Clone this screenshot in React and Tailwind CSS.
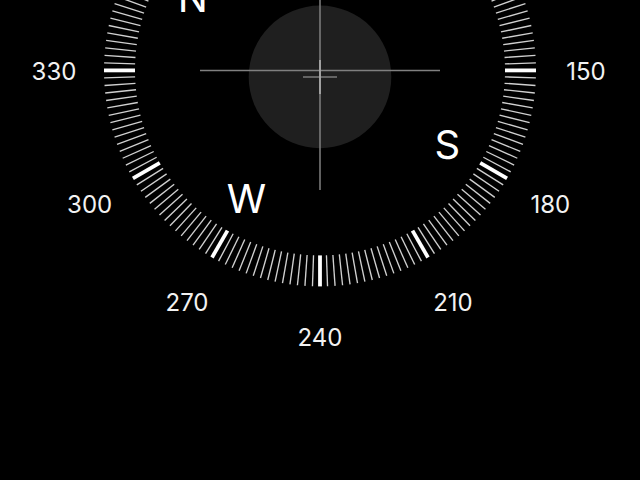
const HEADING = 60;
const OUTER_RADIUS = 216;
const INNER_RADIUS = 185;
const LABEL_RADIUS = 266;
const CARDINAL_RADIUS = 147;

// The dial is cropped at the top, only these bearings are in view
const bearings = [150, 180, 210, 240, 270, 300, 330];

const cardinals = [
  { letter: "N", degrees: 0 },
  { letter: "S", degrees: 180 },
  { letter: "W", degrees: 270 },
];

// Point on the dial for a bearing, with the current heading at the top
const pointAt = (degrees, radius) => {
  const angle = ((degrees - HEADING) * Math.PI) / 180;
  return { x: Math.sin(angle) * radius, y: -Math.cos(angle) * radius };
};

function Ticks() {
  return Array.from({ length: 180 }, (_, i) => {
    const degrees = i * 2;
    const major = degrees % 30 === 0;
    return (
      <line
        key={degrees}
        y1={-INNER_RADIUS}
        y2={-OUTER_RADIUS}
        transform={`rotate(${degrees - HEADING})`}
        className={major ? "stroke-white" : "stroke-[#d0d0d0]"}
        strokeWidth={major ? 3.8 : 1.35}
      />
    );
  });
}

function DegreeLabels() {
  return bearings.map((degrees) => {
    const { x, y } = pointAt(degrees, LABEL_RADIUS);
    return (
      <text
        key={degrees}
        x={x}
        y={y + 10}
        textAnchor="middle"
        className="fill-[#f2f2f2] text-[24px]"
      >
        {degrees}
      </text>
    );
  });
}

function Cardinals() {
  return cardinals.map(({ letter, degrees }) => {
    const { x, y } = pointAt(degrees, CARDINAL_RADIUS);
    return (
      <text
        key={letter}
        x={x}
        y={y + 15}
        textAnchor="middle"
        className="fill-white text-[40px]"
      >
        {letter}
      </text>
    );
  });
}

// Fixed crosshair plus the level bubble with its own small cross
function Level() {
  return (
    <g>
      <circle cx="0" cy="6.5" r="71.3" className="fill-[#1f1f1f]" />
      <path d="M-120 0H120M0 -120V119.5" className="stroke-[#808080]" strokeWidth="1.5" />
      <path d="M-17 6.7H17" className="stroke-[#7c7c7c]" strokeWidth="1.5" />
      <path d="M0 -10.5V23.5" className="stroke-[#b4b4b4]" strokeWidth="1.5" />
    </g>
  );
}

export default function App() {
  return (
    <main className="min-h-screen overflow-hidden bg-black font-['Inter',sans-serif]">
      <svg
        viewBox="-320 -70.4 640 480"
        className="block h-auto w-full"
        role="img"
        aria-label="Compass"
      >
        <Level />
        <Ticks />
        <DegreeLabels />
        <Cardinals />
      </svg>
    </main>
  );
}
